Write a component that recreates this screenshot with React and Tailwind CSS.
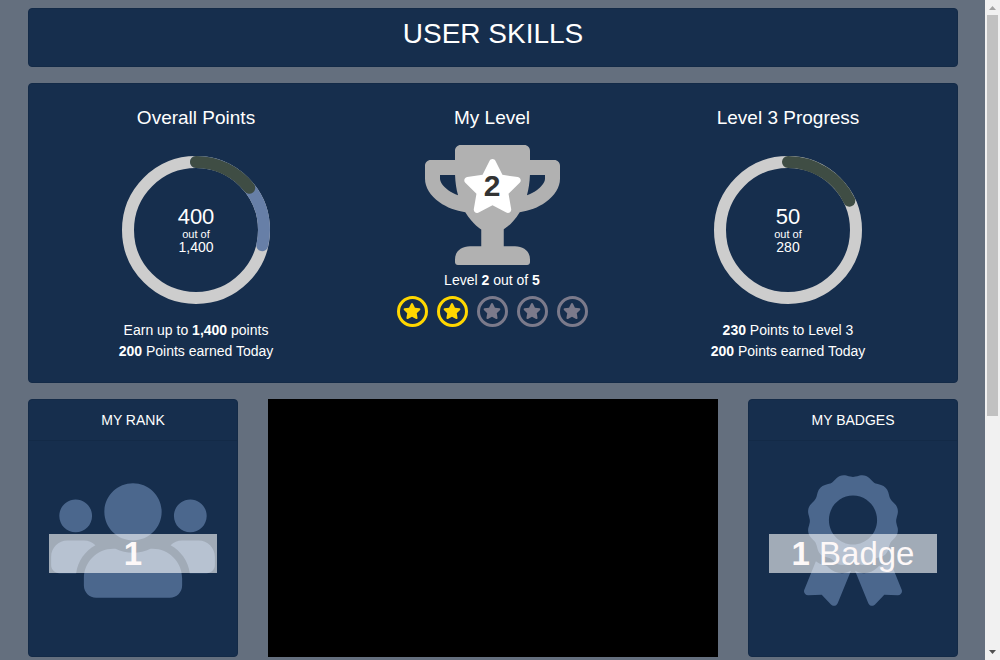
import React from "react";
import { FaTrophy, FaStar, FaUsers, FaAward } from "react-icons/fa";

const RADIUS = 68;
const CIRCUMFERENCE = 2 * Math.PI * RADIUS;

function Card({ className = "", children }) {
  return (
    <section className={`rounded border border-[#132a47] bg-[#162e4d] ${className}`}>
      {children}
    </section>
  );
}

function Arc({ fraction, color }) {
  return (
    <circle
      cx="74"
      cy="74"
      r={RADIUS}
      fill="none"
      stroke={color}
      strokeWidth="12"
      strokeLinecap="round"
      strokeDasharray={`${fraction * CIRCUMFERENCE} ${CIRCUMFERENCE}`}
      transform="rotate(-90 74 74)"
    />
  );
}

function ProgressRing({ value, total, arcs }) {
  return (
    <div className="mx-auto grid w-[148px] place-items-center">
      <svg viewBox="0 0 148 148" className="col-start-1 row-start-1 size-[148px]" aria-hidden="true">
        <circle cx="74" cy="74" r={RADIUS} fill="none" stroke="#cdcdcd" strokeWidth="12" />
        {arcs.map((arc) => (
          <Arc key={arc.color} {...arc} />
        ))}
      </svg>
      <div className="col-start-1 row-start-1 flex flex-col">
        <span className="text-[22px] leading-[22px]">{value}</span>
        <span className="text-[11px] leading-3">out of</span>
        <span className="text-sm leading-[14px]">{total}</span>
      </div>
    </div>
  );
}

function ProgressColumn({ title, ring, children }) {
  return (
    <div>
      <h2 className="text-[19px] leading-6">{title}</h2>
      <div className="pt-[26px] pb-4">
        <ProgressRing {...ring} />
      </div>
      <div className="text-sm leading-[21px]">{children}</div>
    </div>
  );
}

function LevelStar({ earned }) {
  return (
    <li
      className={`flex size-[31px] items-center justify-center rounded-full border-3 ${
        earned ? "border-[#ffd700] text-[#ffd700]" : "border-[#7b7a8b] text-[#7b7a8b]"
      }`}
    >
      <FaStar className="mb-px h-4 w-[18px]" />
    </li>
  );
}

function SummaryCard({ title, icon, children }) {
  return (
    <Card className="flex flex-col">
      <h2 className="border-b border-[#132a47] py-[10px] text-sm leading-5">{title}</h2>
      <div className="grid flex-1 justify-items-center px-5 pt-[34px] pb-[50px]">
        <div className="col-start-1 row-start-1 text-[#4b678d]">{icon}</div>
        <p className="col-start-1 row-start-1 mt-[59px] h-[39px] w-full bg-white/60 text-[33px] leading-[39px] text-[#fdf8f8]">
          {children}
        </p>
      </div>
    </Card>
  );
}

function Scrollbar() {
  return (
    <div className="flex w-[15px] shrink-0 flex-col items-center bg-[#f1f1f1]" aria-hidden="true">
      <svg viewBox="0 0 15 15" className="size-[15px]">
        <path d="M4 10h7L7.5 6z" fill="#a3a3a3" />
      </svg>
      <div className="flex min-h-0 w-full flex-1 justify-center">
        <div className="h-[63.7%] w-[11px] bg-[#c1c1c1]" />
      </div>
      <svg viewBox="0 0 15 15" className="size-[15px]">
        <path d="M4 5h7L7.5 9z" fill="#505050" />
      </svg>
    </div>
  );
}

export default function App() {
  return (
    <div className="flex h-screen bg-[#646f7e] font-['Liberation_Sans',Arial,sans-serif] text-white">
      <main className="flex min-w-0 flex-1 flex-col gap-4 overflow-hidden pt-2 pr-[27px] pl-7 text-center">
        <Card className="shrink-0 pt-2 pb-4">
          <h1 className="text-[28px] leading-[33px]">USER SKILLS</h1>
        </Card>

        <Card className="grid shrink-0 grid-cols-3 pt-[22px] pr-[21px] pb-5 pl-[19px]">
          <ProgressColumn
            title="Overall Points"
            ring={{
              value: "400",
              total: "1,400",
              arcs: [
                { fraction: 400 / 1400, color: "#677fa7" },
                { fraction: 200 / 1400, color: "#3f4d44" },
              ],
            }}
          >
            <p>
              Earn up to <b>1,400</b> points
            </p>
            <p>
              <b>200</b> Points earned Today
            </p>
          </ProgressColumn>

          <div>
            <h2 className="text-[19px] leading-6">My Level</h2>
            <div className="mt-[15px] grid justify-items-center">
              <FaTrophy className="col-start-1 row-start-1 h-[120px] w-[135px] text-[#b1b1b1]" />
              <FaStar className="col-start-1 row-start-1 mt-[14px] h-[54px] w-[61px] text-white" />
              <b className="col-start-1 row-start-1 mt-6 text-[30px] leading-[34px] text-[#333333]">2</b>
            </div>
            <p className="mt-[5px] text-sm leading-[21px]">
              Level <b>2</b> out of <b>5</b>
            </p>
            <ul className="mt-[5px] flex justify-center gap-[9px]">
              {[1, 2, 3, 4, 5].map((level) => (
                <LevelStar key={level} earned={level <= 2} />
              ))}
            </ul>
          </div>

          <ProgressColumn
            title="Level 3 Progress"
            ring={{
              value: "50",
              total: "280",
              arcs: [{ fraction: 50 / 280, color: "#3f4d44" }],
            }}
          >
            <p>
              <b>230</b> Points to Level 3
            </p>
            <p>
              <b>200</b> Points earned Today
            </p>
          </ProgressColumn>
        </Card>

        <div className="grid shrink-0 grid-cols-4 gap-[30px]">
          <SummaryCard title="MY RANK" icon={<FaUsers className="h-[131px] w-[164px]" />}>
            <b>1</b>
          </SummaryCard>
          <div className="col-span-2 bg-black" />
          <SummaryCard title="MY BADGES" icon={<FaAward className="h-[131px] w-[98px]" />}>
            <b>1</b> Badge
          </SummaryCard>
        </div>
      </main>
      <Scrollbar />
    </div>
  );
}
